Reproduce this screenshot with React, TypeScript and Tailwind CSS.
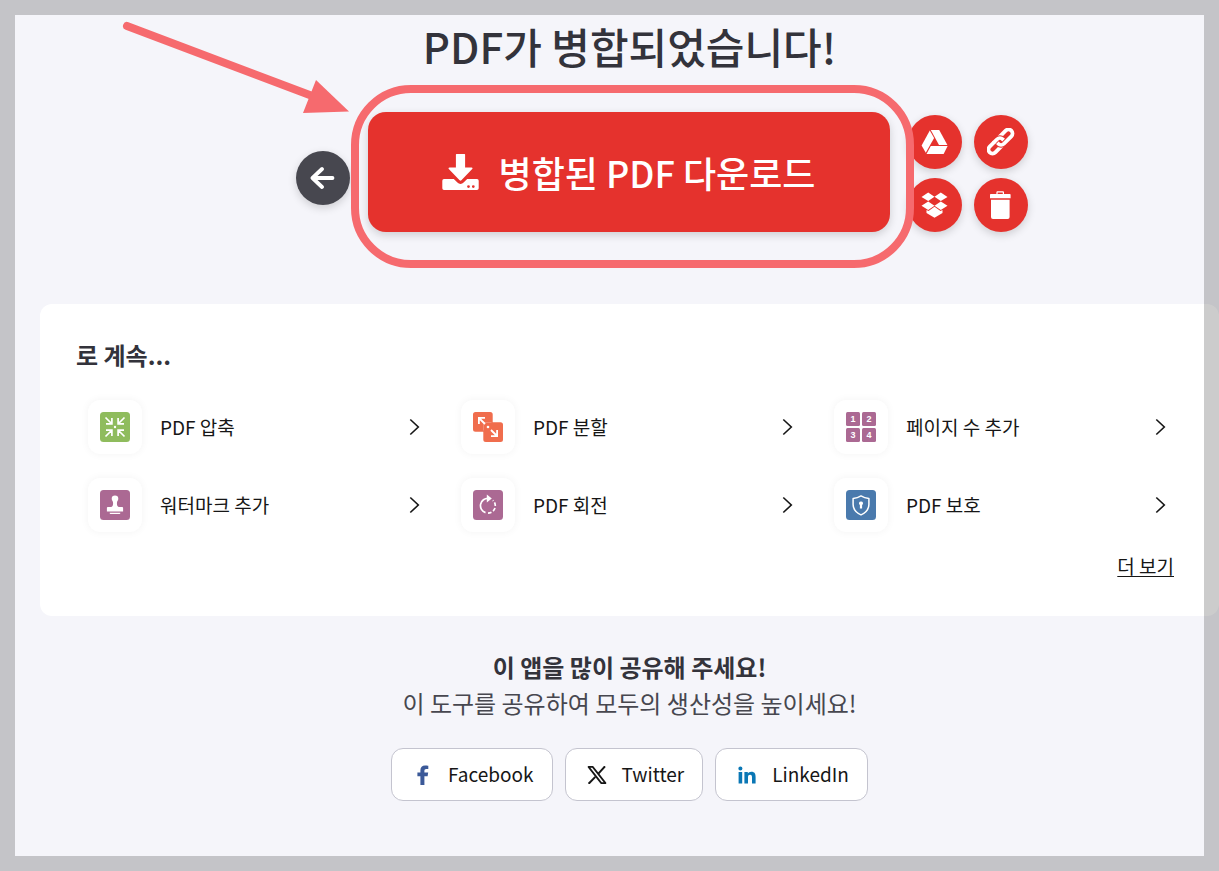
import type { ReactNode } from "react";

function BackIcon() {
  return (
    <svg viewBox="0 0 26 24" className="h-6 w-[26px]" fill="none" stroke="currentColor" strokeWidth="3.800" strokeLinecap="round" strokeLinejoin="round" aria-hidden="true">
      <path d="M22.500 12H2.500M12 3 2.500 12l9.500 9" />
    </svg>
  );
}

function DownloadIcon() {
  return (
    <svg viewBox="0 0 37 37" className="size-[37px]" fill="currentColor" aria-hidden="true">
      <path d="M14.500 0h8a.6.600 0 0 1 .6.600V13.500H29.600c.9 0 1.300 1 .6 1.600L19.400 26.200c-.5.600-1.300.600-1.800 0L6.800 15.100c-.6-.6-.2-1.600.7-1.600H13.900V.6c0-.3.300-.6.600-.6Z" />
      <path fillRule="evenodd" d="M2 25h9.800l3.600 3.600a4.300 4.300 0 0 0 6.200 0L25.200 25H35a1.700 1.700 0 0 1 1.700 1.700v7.600A1.700 1.700 0 0 1 35 36H2a1.700 1.700 0 0 1-1.700-1.700v-7.600A1.700 1.700 0 0 1 2 25Zm24.500 6.200a1.400 1.400 0 1 0 0 2.800 1.400 1.400 0 0 0 0-2.800Zm4.800 0a1.400 1.400 0 1 0 0 2.800 1.400 1.400 0 0 0 0-2.800Z" />
    </svg>
  );
}

function DriveIcon() {
  return (
    <svg viewBox="0 0 28 26" className="h-[26px] w-7" fill="currentColor" aria-hidden="true">
      <path d="M8.800 1.500 13.100 8.900 4.800 23.700.6 16.500Z" />
      <path d="M9.800 1h8.400l8.200 15H18Z" />
      <path d="M9.800 17h16.800l-4 8H5.500Z" />
    </svg>
  );
}

function LinkIcon() {
  return (
    <svg viewBox="0 0 28 28" className="size-7" fill="none" aria-hidden="true">
      <g transform="translate(13.500 13.500) rotate(-45)">
        <rect x="-15.300" y="-4" width="18.500" height="8" rx="4" stroke="currentColor" strokeWidth="3.800" />
        <path d="M3.500-4h7.800a4 4 0 0 1 0 8H.8a4 4 0 0 1-4-4" stroke="#e5322d" strokeWidth="5.600" />
        <rect x="-3.200" y="-4" width="18.500" height="8" rx="4" stroke="currentColor" strokeWidth="3.800" />
        <path d="M-5-4h4.200a4 4 0 0 1 4 4" stroke="#e5322d" strokeWidth="5.400" />
        <path d="M-6-4h5.200a4 4 0 0 1 4 4v.7" stroke="currentColor" strokeWidth="3.800" />
      </g>
    </svg>
  );
}

function DropboxIcon() {
  return (
    <svg viewBox="0 0 28 26" className="h-[26px] w-7" fill="currentColor" aria-hidden="true">
      <path d="m7.200.5 6.300 4.200-6.300 4.400L.5 4.900ZM19.800.5l6.700 4.400-6.700 4.200-6.300-4.400ZM7.200 9.500l6.300 4.300-6.300 4.300L.5 13.800ZM19.800 9.500l6.700 4.300-6.700 4.300-6.300-4.300ZM13.500 14.800l6 4.300 2-1.200v3l-8 4.800-8-4.800v-3l2 1.200Z" />
    </svg>
  );
}

function TrashIcon() {
  return (
    <svg viewBox="0 0 22 28" className="h-7 w-[22px]" fill="currentColor" aria-hidden="true">
      <path fillRule="evenodd" d="M6.400 3V1.600C6.400.700 6.900.200 7.800.200h4.800c.9 0 1.400.500 1.400 1.400V3h5.900a.7.700 0 0 1 .7.700v3.500H0V3.700A.7.700 0 0 1 .7 3Zm1.200 0h5.200V1.400H7.600Z" />
      <path d="M1 8.800h18.600V26a2 2 0 0 1-2 2H3a2 2 0 0 1-2-2Z" />
    </svg>
  );
}

function ToolIcon({ children }: { children: ReactNode }) {
  return (
    <svg viewBox="0 0 30 30" className="size-[30px]" fill="none" aria-hidden="true">
      {children}
    </svg>
  );
}

const compressIcon = (
  <ToolIcon>
    <rect width="30" height="30" rx="3.500" fill="#8fbc5d" />
    <g stroke="#fff" strokeWidth="1.700">
      <path d="m5.500 5.500 6 6M11.900 6v5.900H6M24.500 5.500l-6 6M18.100 6v5.900H24M5.500 24.500l6-6M11.900 24v-5.900H6M24.500 24.500l-6-6M18.100 24v-5.900H24" />
    </g>
    <circle cx="15" cy="15" r="1.200" fill="#fff" />
  </ToolIcon>
);

const splitIcon = (
  <ToolIcon>
    <path d="M2.500 0h14.700a2.500 2.500 0 0 1 2.500 2.500v7.800h7.800a2.500 2.500 0 0 1 2.500 2.500v14.700a2.500 2.500 0 0 1-2.500 2.500H12.800a2.500 2.500 0 0 1-2.500-2.500v-7.800H2.500A2.500 2.500 0 0 1 0 17.200V2.500A2.500 2.500 0 0 1 2.500 0Z" fill="#f06d4d" />
    <path d="M10.500 18.500v-8h8" stroke="#fff" strokeOpacity=".35" strokeWidth=".6" />
    <path d="m6 6 6 6M5.900 12V5.900H12M18 18l6 6M24.100 18v6.100H18" stroke="#fff" strokeWidth="1.800" />
    <circle cx="15" cy="15" r="1.300" fill="#fff" />
  </ToolIcon>
);

const pageNumberIcon = (
  <ToolIcon>
    <g fill="#ab6993">
      <rect width="14" height="14" rx="1.500" />
      <rect x="16" width="14" height="14" rx="1.500" />
      <rect y="16" width="14" height="14" rx="1.500" />
      <rect x="16" y="16" width="14" height="14" rx="1.500" />
    </g>
    <g fill="#fff" fontFamily="Liberation Sans, sans-serif" fontSize="9" fontWeight="700" textAnchor="middle">
      <text x="7" y="10">1</text>
      <text x="23" y="10">2</text>
      <text x="7" y="26">3</text>
      <text x="23" y="26">4</text>
    </g>
  </ToolIcon>
);

const watermarkIcon = (
  <ToolIcon>
    <rect width="30" height="30" rx="3.500" fill="#ab6993" />
    <path d="M15 5.500a3.300 3.300 0 0 1 3.300 3.300c0 1.700-1.400 2.500-1.400 4.200 0 2.100.5 3.900 1.900 3.900h3.400c.5 0 .9.400.9.900v3.800H6.900v-3.800c0-.5.400-.9.900-.9h3.400c1.400 0 1.900-1.800 1.900-3.900 0-1.700-1.400-2.500-1.400-4.200A3.300 3.300 0 0 1 15 5.500ZM9.700 22.800h10.600v.5c0 .5-.3.800-.8.800h-9c-.5 0-.8-.3-.8-.8Z" fill="#fff" />
  </ToolIcon>
);

const rotateIcon = (
  <ToolIcon>
    <rect width="30" height="30" rx="3.500" fill="#ab6993" />
    <path d="M15.500 8.400a7.300 7.300 0 0 0-3 14.200" stroke="#fff" strokeWidth="1.700" />
    <path d="M15 23.100a7.300 7.300 0 0 0 7.300-7.300 7.300 7.300 0 0 0-2.500-5.500" stroke="#fff" strokeWidth="1.700" strokeDasharray="3.600 2" />
    <path d="m13.800 4.600 5 4-5 4Z" fill="#fff" />
  </ToolIcon>
);

const protectIcon = (
  <ToolIcon>
    <rect width="30" height="30" rx="3.500" fill="#4a7aad" />
    <path d="M15 5.900c2.500 1.600 4.900 2.300 7.900 2.500v6c0 5-3.100 8.400-7.900 10.500-4.800-2.100-7.900-5.500-7.900-10.500v-6c3-.2 5.400-.9 7.900-2.500Z" stroke="#fff" strokeWidth="1.500" strokeLinejoin="round" />
    <path d="M15 11.400a2 2 0 0 1 1.100 3.700v3.500h-2.200v-3.500a2 2 0 0 1 1.100-3.700Z" fill="#fff" />
  </ToolIcon>
);

const tools = [
  { label: "PDF 압축", icon: compressIcon },
  { label: "PDF 분할", icon: splitIcon },
  { label: "페이지 수 추가", icon: pageNumberIcon },
  { label: "워터마크 추가", icon: watermarkIcon },
  { label: "PDF 회전", icon: rotateIcon },
  { label: "PDF 보호", icon: protectIcon },
];

function ChevronIcon() {
  return (
    <svg viewBox="0 0 24 24" className="size-6" fill="none" stroke="#161616" strokeWidth="1.600" aria-hidden="true">
      <path d="m9.300 4.500 8 7.500-8 7.500" />
    </svg>
  );
}

const shares = [
  {
    label: "Facebook",
    icon: (
      <svg viewBox="0 0 12 20" className="h-5 w-3" fill="#3b5998" aria-hidden="true">
        <path d="M3.400 20v-8.800H.4V7.600h3V5.200C3.400 2 5.200.4 8 .4c1.300 0 2.700.2 3.300.3V4H9.300C7.800 4 7.400 4.800 7.400 5.900v1.700h3.800l-.6 3.600H7.400V20Z" />
      </svg>
    ),
  },
  {
    label: "Twitter",
    icon: (
      <svg viewBox="0 0 20 18" className="h-[18px] w-5" fill="none" stroke="#161616" aria-hidden="true">
        <path d="M1.500.9h4.200L18.500 17.100h-4.200Z" strokeWidth="1.700" strokeLinejoin="round" />
        <path d="M18 .3 11.400 7.600M8.300 10.900 1.600 17.800" strokeWidth="2" />
      </svg>
    ),
  },
  {
    label: "LinkedIn",
    icon: (
      <svg viewBox="0 0 18 18" className="size-[18px]" fill="#0a77b5" aria-hidden="true">
        <path d="M.6 6h3.600v11.500H.6ZM2.400.4a2 2 0 1 1 0 4.100 2 2 0 0 1 0-4.100ZM6.400 6h3.400v1.600c.7-1.200 1.900-1.900 3.500-1.900 3.500 0 4.300 2.200 4.300 5.400v6.400H14v-5.700c0-1.600-.1-3-1.900-3s-2.100 1.300-2.100 3v5.700H6.400Z" />
      </svg>
    ),
  },
];

function RoundButton({ label, dark = false, children }: { label: string; dark?: boolean; children: ReactNode }) {
  return (
    <button
      type="button"
      aria-label={label}
      className={`flex size-[54px] items-center justify-center rounded-full text-white shadow-[0_3px_9px_rgba(0,0,0,0.16)] ${dark ? "bg-[#47474f]" : "bg-[#e5322d]"}`}
    >
      {children}
    </button>
  );
}

function Callout() {
  return (
    <>
      <div className="pointer-events-none absolute -top-[27px] -right-6 -bottom-9 -left-[17px] z-10 rounded-[60px] border-8 border-[#f66a6e]" />
      <svg viewBox="0 0 230 95" className="pointer-events-none absolute -top-[92px] -left-[248px] z-10 h-[95px] w-[230px]" aria-hidden="true">
        <path d="M7 6 195 77" stroke="#f66a6e" strokeWidth="8" strokeLinecap="round" />
        <path d="m196 60 33 31.500-46 1.500Z" fill="#f66a6e" />
      </svg>
    </>
  );
}

export default function App() {
  return (
    <div className="relative min-h-screen overflow-hidden bg-[#f5f5fa] pb-[70px] pl-10 font-['Noto_Sans_CJK_KR',sans-serif] text-[#161616]">
      <main>
        <h1 className="pt-4 text-center text-[42px] leading-[60px] font-medium text-[#33333b]">PDF가 병합되었습니다!</h1>

        <section className="mt-9 grid grid-cols-[1fr_522px_1fr] items-end gap-[18px] pr-0.5">
          <div className="flex h-[108px] items-center justify-end">
            <RoundButton label="뒤로" dark>
              <BackIcon />
            </RoundButton>
          </div>
          <div className="relative">
            <button type="button" className="flex h-[120px] w-full items-center justify-center gap-5 rounded-[18px] bg-[#e5322d] text-4xl font-medium text-white shadow-[0_3px_9px_rgba(0,0,0,0.16)]">
              <DownloadIcon />
              <span>병합된 PDF 다운로드</span>
            </button>
            <Callout />
          </div>
          <div className="grid w-[120px] grid-cols-2 gap-x-3 gap-y-[9px]">
            <RoundButton label="Google Drive">
              <DriveIcon />
            </RoundButton>
            <RoundButton label="링크 공유">
              <LinkIcon />
            </RoundButton>
            <RoundButton label="Dropbox">
              <DropboxIcon />
            </RoundButton>
            <RoundButton label="삭제">
              <TrashIcon />
            </RoundButton>
          </div>
        </section>

        <section className="mt-[72px] rounded-xl bg-white p-9">
          <h2 className="text-2xl leading-[30px] font-bold text-[#33333b]">로 계속...</h2>
          <ul className="mt-[30px] grid grid-cols-3 gap-x-3 gap-y-6">
            {tools.map((tool) => (
              <li key={tool.label}>
                <a href="#" className="flex items-center px-3">
                  <span className="mr-[18px] flex size-[54px] shrink-0 items-center justify-center rounded-xl bg-white shadow-[0_0_9px_rgba(0,0,0,0.05)]">
                    {tool.icon}
                  </span>
                  <span className="flex-1 text-[19px] leading-7">{tool.label}</span>
                  <ChevronIcon />
                </a>
              </li>
            ))}
          </ul>
          <div className="mt-5 flex justify-end pr-[9px]">
            <a href="#" className="text-[19px] leading-7 underline underline-offset-2">더 보기</a>
          </div>
        </section>

        <section className="mt-[33px] text-center">
          <h2 className="text-2xl leading-9 font-bold text-[#33333b]">이 앱을 많이 공유해 주세요!</h2>
          <p className="text-2xl leading-9 text-[#47474f]">이 도구를 공유하여 모두의 생산성을 높이세요!</p>
          <div className="mt-[27px] flex justify-center gap-3">
            {shares.map((share) => (
              <a key={share.label} href="#" className="flex h-[53px] items-center rounded-xl border border-[#c4c4cf] bg-white px-[18px] text-[19px]">
                <span className="mr-3 flex w-[26px] justify-center">{share.icon}</span>
                {share.label}
              </a>
            ))}
          </div>
        </section>
      </main>
      <div className="pointer-events-none absolute inset-0 border-[15px] border-black/20" />
    </div>
  );
}
